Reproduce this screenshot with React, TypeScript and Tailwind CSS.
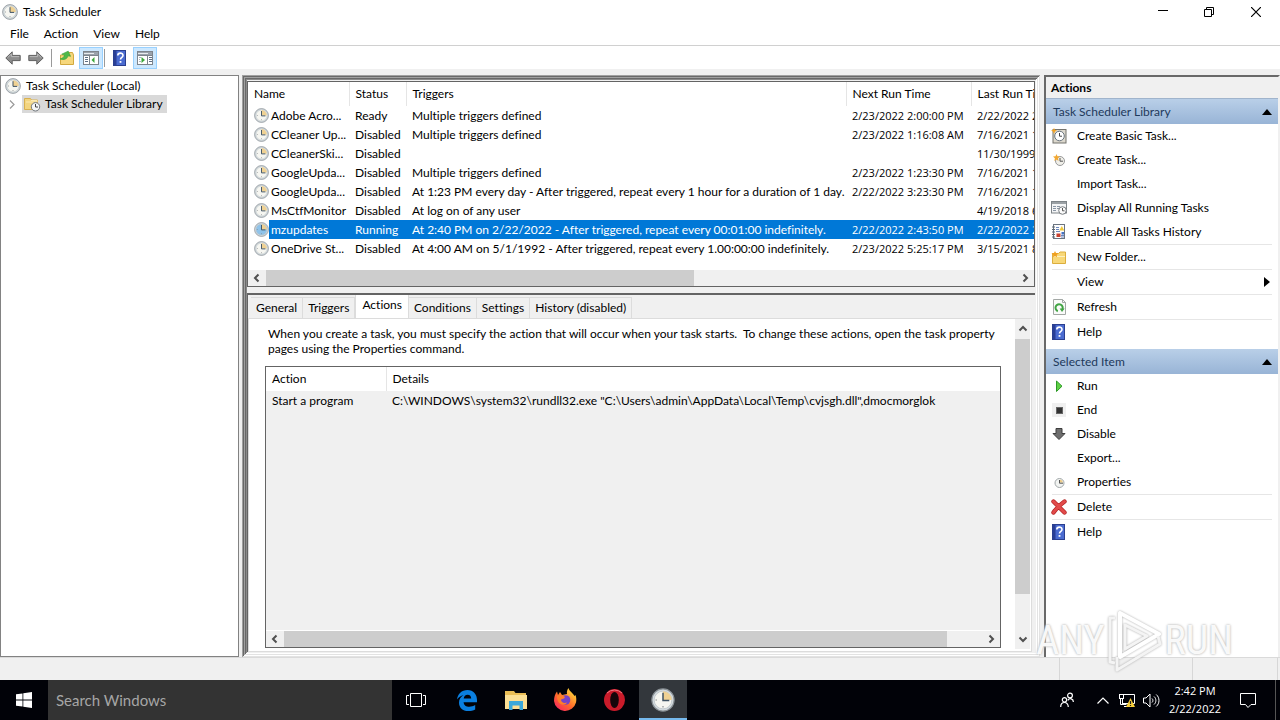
import type { ReactNode } from "react";

type IconProps = { size?: number };

function Clock({ size = 16, tint = "#f6f6f1" }: IconProps & { tint?: string }) {
  return (
    <svg width={size} height={size} viewBox="0 0 16 16" className="shrink-0">
      <circle cx="8" cy="8" r="7.4" fill="#d3dade" stroke="#8b9297" strokeWidth=".8" />
      <circle cx="8" cy="8" r="5.9" fill={tint} stroke="#b9c2c7" strokeWidth=".5" />
      <path d="M8 8V2.2A5.8 5.8 0 0 1 13.8 8z" fill="#efd193" />
      <path d="M8 3.2V8.4H12.2" fill="none" stroke="#3f5263" strokeWidth="1" />
      <path d="M3 8h1M8 12v1" stroke="#8b8f94" strokeWidth=".8" />
    </svg>
  );
}

function Arrow({ flip }: { flip?: boolean }) {
  return (
    <svg width="16" height="16" viewBox="0 0 16 16" className={flip ? "-scale-x-100" : ""}>
      <path d="M.8 8 7.2 1.8V5.4H15.2V10.6H7.2V14.2Z" fill="#8d8d8d" stroke="#5f5f5f" strokeWidth="1" />
      <path d="M2.6 7.6 6.4 4v2.6h7.8" fill="none" stroke="#b9b9b9" strokeWidth="1" />
    </svg>
  );
}

function FolderUp() {
  return (
    <svg width="16" height="16" viewBox="0 0 16 16">
      <path d="M1.5 5H8l1.5-2.5h4l1 2.500v9.500h-13z" fill="#f6d77c" stroke="#d2a93f" />
      <path d="M2 10.500c2.500-1 3.500-3 3.300-5H2.500L8 1l3.500 4.500H9c0 3.500-3 5.500-7 5z" fill="#4fb848" stroke="#36a136" strokeWidth=".6" transform="rotate(14 8 6)" />
    </svg>
  );
}

function PaneIcon({ right }: { right?: boolean }) {
  return (
    <svg width="16" height="14" viewBox="0 0 16 14">
      <rect x=".5" y=".5" width="15" height="13" fill="#fff" stroke="#7d848c" />
      <path d="M1 1h14v3H1z" fill="#9aa2ab" />
      <path d="M1 2.500h10" stroke="#e8ebee" />
      {right ? (
        <g>
          <path d="M10.500 4v9.500M.500 4.500h15" stroke="#7d848c" />
          <path d="M12 6.500h3M12 8.500h3M12 10.500h3" stroke="#5d6f86" />
          <path d="M4.500 6v6L8 9z" fill="#3ca83c" />
          <path d="M2 6.500h2M2 8.500h1M2 10.500h2" stroke="#a9b3bd" />
        </g>
      ) : (
        <g>
          <path d="M6.500 4v9.500M.500 4.500h15" stroke="#7d848c" />
          <path d="M2 6.500h3M2 8.500h3M2 10.500h3" stroke="#5d6f86" />
          <path d="M11.500 6v6L8.500 9z" fill="#3ca83c" />
        </g>
      )}
    </svg>
  );
}

function HelpIcon() {
  return (
    <svg width="16" height="16" viewBox="0 0 16 16" className="shrink-0">
      <rect x="1.500" y=".5" width="12" height="15" fill="#4a6bd0" stroke="#2b3f8f" />
      <path d="M2 1h2.500v14H2z" fill="#2a3f96" />
      <path d="M5.800 5.500C5.800 2.300 11 2.300 11 5.400c0 2-2.500 2-2.500 4.200" fill="none" stroke="#fff" strokeWidth="1.600" />
      <rect x="7.600" y="11" width="1.800" height="1.800" fill="#fff" />
    </svg>
  );
}

function TaskFolder() {
  return (
    <svg width="18" height="16" viewBox="0 0 18 16">
      <path d="M1.500 2.500h6l1 1.500h6v9.500h-13z" fill="#f3d580" stroke="#d8b050" />
      <path d="M3 6h11v-1.500H8" fill="none" stroke="#fbeab5" />
      <circle cx="12.500" cy="10.800" r="4.200" fill="#f5f7f8" stroke="#70767b" />
      <path d="M12.500 8v3h2.500" fill="none" stroke="#444" />
    </svg>
  );
}

function BasicTask() {
  return (
    <svg width="16" height="16" viewBox="0 0 16 16">
      <rect x="2" y="1.500" width="13" height="13.500" fill="#dcd8cd" stroke="#73726d" />
      <circle cx="8.500" cy="8" r="4.800" fill="#fff" stroke="#66717b" />
      <path d="M8.500 5v3.200H11" fill="none" stroke="#444" />
      <path d="M3 0l1 2 2 .5-2 1L3 6 2 3.500 0 2.500 2 2z" fill="#f4a321" />
    </svg>
  );
}

function NewTask() {
  return (
    <svg width="16" height="16" viewBox="0 0 16 16">
      <circle cx="9" cy="9" r="4.500" fill="#f0efe9" stroke="#98999a" />
      <path d="M9 6v3.200h3" fill="none" stroke="#555" />
      <path d="M5.500 2l1 2.200 2.500.3-2 1.800.5 2.700-2-1.400L3.300 9l.6-2.700L2 4.500l2.500-.3z" fill="#f2a832" />
    </svg>
  );
}

function RunningTasks() {
  return (
    <svg width="16" height="16" viewBox="0 0 16 16">
      <rect x=".5" y="1.500" width="15" height="11.500" fill="#f4f5f6" stroke="#7e8488" />
      <path d="M1 3h14" stroke="#9ba1a5" strokeWidth="2" />
      <path d="M2 6.500h3M6 6.500h3M2 8.500h3M6 8.500h2M2 10.500h3" stroke="#8a96a5" />
      <circle cx="11.500" cy="10.500" r="3.800" fill="#fbfbfb" stroke="#777c80" />
      <path d="M11.500 8v2.800h2" fill="none" stroke="#555" />
    </svg>
  );
}

function History() {
  return (
    <svg width="16" height="16" viewBox="0 0 16 16">
      <rect x="2.500" y=".5" width="11" height="14" fill="#fdfdfd" stroke="#6b7480" />
      <path d="M1 3h3M1 5.500h3M1 8h3M1 10.500h3M1 13h3" stroke="#5b6673" />
      <path d="M5 3.500h3M5 5.500h3M5 7.500h4M10 11.500h3M10 13h3" stroke="#6c87bd" />
      <path d="M10.800 2l2.500 4.500h-5z" fill="#f0c83a" />
      <rect x="5.500" y="9.500" width="4" height="3.500" fill="#c9402f" />
      <rect x="10.500" y="8" width="2.500" height="2.500" fill="#4472c4" />
    </svg>
  );
}

function NewFolder() {
  return (
    <svg width="16" height="16" viewBox="0 0 16 16">
      <path d="M1.500 4.500h6l1.500-1.500h5.500v11.500h-13z" fill="#f8d878" stroke="#dcae3d" />
      <path d="M2 7.500h12" stroke="#fdf0bf" />
      <path d="M4 2l1 2 2.500.3-1.800 1.600.4 2.300L4 7 2 8.200l.3-2.300L.5 4.300 3 4z" fill="#f0a020" />
    </svg>
  );
}

function Refresh() {
  return (
    <svg width="16" height="16" viewBox="0 0 16 16">
      <path d="M2.500.5h9l3 3v12h-12z" fill="#fafbfa" stroke="#a3a8a5" />
      <path d="M11.500.5v3h3" fill="none" stroke="#a3a8a5" />
      <path d="M6.800 12.200A3.600 3.600 0 1 1 11.300 10.500" fill="none" stroke="#41a444" strokeWidth="2" />
      <path d="M8.600 9.500h5L11 13z" fill="#41a444" />
    </svg>
  );
}

function Run() {
  return (
    <svg width="16" height="16" viewBox="0 0 16 16">
      <path d="M5.500 3v10.500L11 8.200z" fill="#5fd045" stroke="#2c9a26" />
    </svg>
  );
}

function End() {
  return (
    <svg width="16" height="16" viewBox="0 0 16 16">
      <rect x="1" y="1" width="14" height="14" fill="#f0f0f0" />
      <rect x="5.500" y="5.500" width="6" height="6" fill="#333" stroke="#666" />
    </svg>
  );
}

function Disable() {
  return (
    <svg width="16" height="16" viewBox="0 0 16 16">
      <path d="M5 2.500h6v5h3L8 13.500 2 7.500h3z" fill="#6e6e6e" stroke="#3d3d3d" />
    </svg>
  );
}

function SmallClock() {
  return (
    <svg width="16" height="16" viewBox="0 0 16 16">
      <circle cx="8.500" cy="9" r="4.500" fill="#f2f4f2" stroke="#a2a8aa" />
      <path d="M9 5.500a3.500 3.500 0 0 1 3 3H9z" fill="#edcb85" />
      <path d="M8.500 6v3.200H12" fill="none" stroke="#555" />
    </svg>
  );
}

function Delete() {
  return (
    <svg width="16" height="16" viewBox="0 0 16 16" strokeLinecap="round">
      <path d="M2.500 2.500C6 6 10 10 13.500 13.500M13.500 2.500C10 5 5 10 2.500 13.500" fill="none" stroke="#b32424" strokeWidth="4.400" />
      <path d="M2.500 2.500C6 6 10 10 13.500 13.500M13.500 2.500C10 5 5 10 2.500 13.500" fill="none" stroke="#e24a4a" strokeWidth="3" />
    </svg>
  );
}

function Chevron({ dir }: { dir: "left" | "right" | "up" | "down" }) {
  const paths = {
    left: "M6.500 1.500 3 5l3.500 3.500",
    right: "M3.500 1.500 7 5 3.500 8.500",
    up: "M1.500 6.500 5 3l3.500 3.500",
    down: "M1.500 3.500 5 7l3.500-3.500",
  };
  return (
    <svg width="10" height="10" viewBox="0 0 10 10">
      <path d={paths[dir]} fill="none" stroke="#505050" strokeWidth="2" />
    </svg>
  );
}

function HScroll({ thumb }: { thumb: string }) {
  return (
    <div className="flex h-4 shrink-0 bg-[#f0f0f0]">
      <button aria-label="Scroll left" className="flex w-[18px] items-center justify-center">
        <Chevron dir="left" />
      </button>
      <div className="flex-1">
        <div className={`h-full bg-[#cdcdcd] ${thumb}`} />
      </div>
      <button aria-label="Scroll right" className="flex w-[18px] items-center justify-center">
        <Chevron dir="right" />
      </button>
    </div>
  );
}

const tasks = [
  ["Adobe Acro...", "Ready", "Multiple triggers defined", "2/23/2022 2:00:00 PM", "2/22/2022 2"],
  ["CCleaner Up...", "Disabled", "Multiple triggers defined", "2/23/2022 1:16:08 AM", "7/16/2021 1"],
  ["CCleanerSki...", "Disabled", "", "", "11/30/1999"],
  ["GoogleUpda...", "Disabled", "Multiple triggers defined", "2/23/2022 1:23:30 PM", "7/16/2021 1"],
  ["GoogleUpda...", "Disabled", "At 1:23 PM every day - After triggered, repeat every 1 hour for a duration of 1 day.", "2/22/2022 3:23:30 PM", "7/16/2021 1"],
  ["MsCtfMonitor", "Disabled", "At log on of any user", "", "4/19/2018 6"],
  ["mzupdates", "Running", "At 2:40 PM on 2/22/2022 - After triggered, repeat every 00:01:00 indefinitely.", "2/22/2022 2:43:50 PM", "2/22/2022 2"],
  ["OneDrive St...", "Disabled", "At 4:00 AM on 5/1/1992 - After triggered, repeat every 1.00:00:00 indefinitely.", "2/23/2022 5:25:17 PM", "3/15/2021 8"],
];

function TaskList() {
  return (
    <section className="flex h-[206px] shrink-0 flex-col border border-[#646464] bg-white">
      <div className="flex-1 overflow-hidden">
        <table className="w-full table-fixed whitespace-nowrap text-left">
          <colgroup>
            <col className="w-[101px]" />
            <col className="w-[57px]" />
            <col className="w-[440px]" />
            <col className="w-[125px]" />
            <col />
          </colgroup>
          <thead>
            <tr className="h-6">
              {["Name", "Status", "Triggers", "Next Run Time", "Last Run Ti"].map((h) => (
                <th key={h} className="overflow-hidden border-r border-[#e5e5e5] pl-1.5 font-normal last:border-r-0">{h}</th>
              ))}
            </tr>
          </thead>
          <tbody>
            {tasks.map(([name, ...rest], i) => {
              const selected = name === "mzupdates";
              return (
                <tr key={i} className={selected ? "h-[19px] text-white" : "h-[19px]"}>
                  <td className="p-0">
                    <div className="flex items-center pl-1.5">
                      <Clock size={15} tint={selected ? "#8fc3ea" : "#f6f6f1"} />
                      <span className={`flex-1 pl-0.5 leading-[19px] ${selected ? "bg-[#0078d7]" : ""}`}>{name}</span>
                    </div>
                  </td>
                  {rest.map((text, j) => (
                    <td
                      key={j}
                      className={`overflow-hidden p-0 pl-1.5 leading-[19px] ${selected ? "bg-[#0078d7]" : ""} ${j > 1 ? "font-['Open_Sans'] text-[11px]" : ""}`}
                    >
                      {text}
                    </td>
                  ))}
                </tr>
              );
            })}
          </tbody>
        </table>
      </div>
      <HScroll thumb="w-[57%]" />
    </section>
  );
}

function Details() {
  const tabs = ["General", "Triggers", "Actions", "Conditions", "Settings", "History (disabled)"];
  return (
    <section className="mt-1.5 flex min-h-0 flex-1 flex-col border-t-2 border-l border-[#646464] bg-[#f0f0f0] pr-[3px]">
      <div role="tablist" className="flex h-[23px] shrink-0 items-end pl-[3px]">
        {tabs.map((t) => (
          <button
            key={t}
            role="tab"
            className={
              t === "Actions"
                ? "h-[23px] border-x border-[#dcdcdc] bg-white px-1.5 pb-1"
                : "h-[21px] border-t border-r border-[#dcdcdc] px-[5px]"
            }
          >
            {t}
          </button>
        ))}
      </div>
      <div className="flex min-h-0 flex-1 border border-[#dcdcdc] bg-white">
        <div className="flex min-w-0 flex-1 flex-col pt-[7px] pr-3.5 pb-[3px] pl-4">
          <p className="pl-[3px] leading-[15px]">
            When you create a task, you must specify the action that will occur when your task starts.&nbsp; To change these actions, open the task property pages using the Properties command.
          </p>
          <div className="mt-2.5 flex min-h-0 flex-1 flex-col border border-[#646464] bg-[#f0f0f0]">
            <table className="w-full table-fixed text-left">
              <colgroup>
                <col className="w-[120px]" />
                <col />
              </colgroup>
              <thead className="bg-white">
                <tr className="h-6">
                  <th className="border-r border-[#e5e5e5] pl-1.5 font-normal">Action</th>
                  <th className="pl-1.5 font-normal">Details</th>
                </tr>
              </thead>
              <tbody>
                <tr className="h-[19px]">
                  <td className="pl-1.5">Start a program</td>
                  <td className="pl-1.5">C:\WINDOWS\system32\rundll32.exe "C:\Users\admin\AppData\Local\Temp\cvjsgh.dll",dmocmorglok</td>
                </tr>
              </tbody>
            </table>
            <div className="mt-auto border-t border-white">
              <HScroll thumb="w-[95%]" />
            </div>
          </div>
        </div>
        <div className="mr-px mb-0.5 flex w-[15px] flex-col bg-[#f0f0f0]">
          <button aria-label="Scroll up" className="flex h-5 items-center justify-center">
            <Chevron dir="up" />
          </button>
          <div className="flex-1">
            <div className="h-[88%] bg-[#cdcdcd]" />
          </div>
          <button aria-label="Scroll down" className="flex h-5 items-center justify-center">
            <Chevron dir="down" />
          </button>
        </div>
      </div>
    </section>
  );
}

type Action = { label: string; icon?: ReactNode; sep?: boolean; sub?: boolean };

const libraryActions: Action[] = [
  { label: "Create Basic Task...", icon: <BasicTask /> },
  { label: "Create Task...", icon: <NewTask /> },
  { label: "Import Task..." },
  { label: "Display All Running Tasks", icon: <RunningTasks /> },
  { label: "Enable All Tasks History", icon: <History /> },
  { label: "New Folder...", icon: <NewFolder />, sep: true },
  { label: "View", sep: true, sub: true },
  { label: "Refresh", icon: <Refresh />, sep: true },
  { label: "Help", icon: <HelpIcon />, sep: true },
];

const itemActions: Action[] = [
  { label: "Run", icon: <Run /> },
  { label: "End", icon: <End /> },
  { label: "Disable", icon: <Disable /> },
  { label: "Export..." },
  { label: "Properties", icon: <SmallClock /> },
  { label: "Delete", icon: <Delete />, sep: true },
  { label: "Help", icon: <HelpIcon />, sep: true },
];

function ActionGroup({ title, actions }: { title: string; actions: Action[] }) {
  return (
    <div className="mb-[5px]">
      <button className="flex h-[25px] w-full items-center justify-between bg-linear-to-b from-[#b9cfe8] to-[#98b4d6] pr-1.5 pl-[7px] text-[#1e395b]">
        {title}
        <svg width="10" height="6" viewBox="0 0 10 6">
          <path d="M0 6 5 0l5 6z" fill="#000" />
        </svg>
      </button>
      {actions.map((a) => (
        <div key={a.label}>
          {a.sep && <div className="mx-1.5 h-px bg-[#e6e6e6]" />}
          <button className="flex h-6 w-full items-center gap-2.5 pr-2 pl-[5px] text-left">
            <span className="w-4">{a.icon}</span>
            <span className="flex-1">{a.label}</span>
            {a.sub && (
              <svg width="6" height="10" viewBox="0 0 6 10">
                <path d="M0 0l6 5-6 5z" fill="#000" />
              </svg>
            )}
          </button>
        </div>
      ))}
    </div>
  );
}

function Watermark() {
  return (
    <div className="pointer-events-none absolute right-[47px] bottom-[46px] flex items-center font-['Roboto_Condensed'] text-[40px] leading-none text-white/90 [text-shadow:0_0_2px_#bbb,0_0_3px_#ccc]">
      <span>ANY</span>
      <svg width="60" height="66" viewBox="0 0 60 66" fill="none" className="drop-shadow-[0_0_1px_#aaa]">
        <path d="M15 5v44l39-23z" stroke="#fff" strokeWidth="4" strokeLinejoin="round" />
        <path d="M10 10H5v44l5 1M12 49v13l43-26-2-8M20 17v24l22-13z" stroke="#f4f4f4" strokeWidth="3" strokeLinejoin="round" />
      </svg>
      <span>RUN</span>
    </div>
  );
}

function Taskbar() {
  return (
    <footer className="flex h-10 shrink-0 items-stretch bg-[#010208] text-white">
      <button aria-label="Start" className="flex w-12 items-center justify-center">
        <svg width="16" height="16" viewBox="0 0 16 16" fill="#fff">
          <path d="M0 2.300 6.500 1.400V7.500H0zM7.300 1.300 16 0v7.500H7.300zM0 8.400h6.500v6.200L0 13.700zM7.300 8.400H16V16l-8.700-1.200z" />
        </svg>
      </button>
      <input
        aria-label="Search Windows"
        placeholder="Search Windows"
        className="w-[344px] bg-[#333333] px-2 text-[15px] outline-none placeholder:text-[#a6a6a6]"
      />
      <button aria-label="Task View" className="flex w-[51px] items-center justify-center pr-[3px]">
        <svg width="20" height="14" viewBox="0 0 20 14" fill="none" stroke="#fff">
          <path d="M4.500.5h11v13h-11zM3 2.500H.5v9H3M17 2.500h2.500v9H17" />
        </svg>
      </button>
      <div className="flex gap-px">
        <button aria-label="Edge" className="flex w-12 items-center justify-center">
          <svg width="20" height="21" viewBox="0 0 20 21">
            <path d="M0 9.500C.8 4 4.500 0 10.500 0 16.500 0 20 4.500 20 10v2.200H6.600c.2 3 2.600 4.600 5.600 4.600 2.200 0 4.200-.6 6-1.700v4.300c-2 1.100-4.300 1.600-7 1.600C5.500 21 2 17.500 2 12.700c0-3.200 1.700-6 4.600-7.400C3.800 5.800 1.500 7.300 0 9.500zm6.700-.9h7.500c0-2.400-1.300-3.900-3.600-3.900-2.200 0-3.600 1.600-3.900 3.900z" fill="#0a7fe0" />
          </svg>
        </button>
        <button aria-label="File Explorer" className="flex w-12 items-center justify-center">
          <svg width="22" height="19" viewBox="0 0 22 19">
            <path d="M0 0h9l1.500 2H21v16H0z" fill="#e9bd55" />
            <path d="M0 4h22v14H0z" fill="#fbdf94" />
            <path d="M4 19v-9h14v9h-3.500v-4.500h-7V19z" fill="#3aa8da" />
          </svg>
        </button>
        <button aria-label="Firefox" className="flex w-12 items-center justify-center">
          <svg width="24" height="24" viewBox="0 0 24 24">
            <defs>
              <linearGradient id="fox" x1="0" y1="1" x2=".8" y2="0">
                <stop offset="0" stopColor="#f5156c" />
                <stop offset=".5" stopColor="#ff6a2a" />
                <stop offset="1" stopColor="#ffe23c" />
              </linearGradient>
            </defs>
            <path d="M1 13C1 9 2 6 4 3.500L5 7l2-3 2 3 5-1c-.5-2.500.3-4.500 1.500-6 .5 3 4 4.500 6 8l1-1c1 3 1 5 .5 7.500A11.200 11.200 0 0 1 1 13z" fill="url(#fox)" />
            <circle cx="12.500" cy="12" r="4.800" fill="#7542c8" />
            <path d="M4 8c3-2 6-1 8 1l-1 1.500-3 1c0 3 3 4 6 3-2 4-10 3-10-6.500z" fill="#ff7d2a" />
          </svg>
        </button>
        <button aria-label="Opera" className="flex w-12 items-center justify-center">
          <svg width="21" height="22" viewBox="0 0 21 22">
            <ellipse cx="10.500" cy="11" rx="10.500" ry="11" fill="#c91b2a" />
            <path d="M3 4a11 11 0 0 1 15 0" stroke="#ef7680" fill="none" />
            <ellipse cx="10.500" cy="11" rx="4.300" ry="8" fill="#16060a" />
          </svg>
        </button>
        <button aria-label="Task Scheduler" className="flex w-12 items-center justify-center border-b-2 border-[#76b9ed] bg-[#33373c] pt-0.5">
          <Clock size={24} />
        </button>
      </div>
      <div className="flex-1" />
      <div className="flex items-center">
        <button aria-label="People" className="mr-3 flex w-6 justify-center">
          <svg width="14" height="16" viewBox="0 0 14 16" fill="none" stroke="#fff" strokeWidth="1.200">
            <circle cx="10" cy="3.500" r="2.400" />
            <circle cx="4.500" cy="7.800" r="2.200" />
            <path d="M.7 15c0-6 7.600-6 7.600 0M7.800 8.300c2-3 5.600-1.500 5.600 1.700" />
          </svg>
        </button>
        <button aria-label="Show hidden icons" className="flex w-6 justify-center">
          <svg width="12" height="7" viewBox="0 0 12 7" fill="none" stroke="#fff" strokeWidth="1.200">
            <path d="M.5 6.500 6 1l5.500 5.500" />
          </svg>
        </button>
        <button aria-label="Network" className="flex w-6 justify-center">
          <svg width="17" height="15" viewBox="0 0 17 15">
            <path d="M4.500 1.500h11v9H4M1.500 6v5.500h6M3.500 6v5M5 13.500h4" fill="none" stroke="#fff" />
            <rect x=".5" y="1.500" width="4" height="4" fill="#010208" stroke="#fff" />
            <path d="M11.500 5 16 14H7z" fill="#f8cf3a" />
            <path d="M11.500 8v3M11.500 12v1" stroke="#222" strokeWidth="1.200" />
          </svg>
        </button>
        <button aria-label="Volume" className="flex w-6 justify-center">
          <svg width="17" height="15" viewBox="0 0 17 15" fill="none" stroke="#fff">
            <path d="M.5 5H3l4-4v13l-4-4H.5zM9 5.500c1.200 1 1.200 3 0 4M11 3.500c2.500 2 2.500 6 0 8M13.200 1.500c3.700 3 3.700 9 0 12" />
          </svg>
        </button>
        <button className="ml-1 w-[56px] text-center font-['Open_Sans'] text-[11px] leading-[18px]">
          2:42 PM
          <br />
          2/22/2022
        </button>
        <button aria-label="Notifications" className="mr-[3px] flex w-[49px] justify-center">
          <svg width="16" height="16" viewBox="0 0 16 16" fill="none" stroke="#fff">
            <path d="M.5 1.500h15v11H11L8 15.500 5.500 12.500h-5z" />
          </svg>
        </button>
      </div>
      <button aria-label="Show desktop" className="w-[5px] border-l border-[#555]" />
    </footer>
  );
}

export default function App() {
  return (
    <div className="relative flex h-screen flex-col overflow-hidden bg-[#f0f0f0] font-[Lato,'Open_Sans',sans-serif] text-[12px] text-black [font-variant-ligatures:none]">
      <header className="flex h-6 shrink-0 items-center bg-white pl-0.5">
        <Clock size={16} />
        <h1 className="flex-1 pl-[5px]">Task Scheduler</h1>
        <button aria-label="Minimize" className="flex w-[46px] justify-center">
          <svg width="10" height="10" viewBox="0 0 10 10"><path d="M0 3.500h10" stroke="#000" /></svg>
        </button>
        <button aria-label="Restore" className="flex w-[46px] justify-center">
          <svg width="10" height="10" viewBox="0 0 10 10" fill="none" stroke="#000">
            <path d="M.5 2.500h7v7h-7zM2.500 2.500v-2h7v7h-2" />
          </svg>
        </button>
        <button aria-label="Close" className="flex w-12 justify-center">
          <svg width="10" height="10" viewBox="0 0 10 10"><path d="M0 0l10 10M10 0 0 10" stroke="#000" strokeWidth="1.200" /></svg>
        </button>
      </header>
      <nav className="flex h-[21px] shrink-0 items-center gap-[15px] bg-white pb-px pl-2.5">
        {["File", "Action", "View", "Help"].map((m) => (
          <button key={m}>{m}</button>
        ))}
      </nav>
      <div className="flex h-6 shrink-0 items-center border-t border-[#d0d0d0] bg-white pl-[5px]">
        <button aria-label="Back" className="mr-[7px]"><Arrow /></button>
        <button aria-label="Forward"><Arrow flip /></button>
        <span className="mx-[7px] h-[18px] w-px bg-[#9a9a9a]" />
        <button aria-label="Up one level"><FolderUp /></button>
        <button aria-label="Show console tree" className="ml-1 flex h-[22px] w-6 items-center justify-center border border-[#99d1ff] bg-[#cce8ff]">
          <PaneIcon />
        </button>
        <span className="mr-[7px] ml-px h-[18px] w-px bg-[#9a9a9a]" />
        <button aria-label="Help"><HelpIcon /></button>
        <button aria-label="Show action pane" className="ml-[5px] flex h-[22px] w-6 items-center justify-center border border-[#99d1ff] bg-[#cce8ff]">
          <PaneIcon right />
        </button>
      </div>

      <main className="flex min-h-0 flex-1 pt-1.5">
        <aside className="w-[239px] shrink-0 border border-[#828282] bg-white pt-px">
          <button className="flex h-[18px] items-center gap-[5px] pl-1">
            <Clock size={16} />
            <span>Task Scheduler (Local)</span>
          </button>
          <div className="flex h-[18px] items-center">
            <button aria-label="Expand" className="flex w-[21px] justify-center">
              <svg width="6" height="9" viewBox="0 0 6 9"><path d="M1 .5 5 4.500 1 8.500" fill="none" stroke="#999" strokeWidth="1.200" /></svg>
            </button>
            <button className="flex h-[18px] items-center gap-1 bg-[#d9d9d9] pr-1 pl-px">
              <TaskFolder />
              Task Scheduler Library
            </button>
          </div>
        </aside>

        <div className="ml-[3px] flex min-w-0 flex-1 flex-col p-[5px] pt-1.5 shadow-[inset_1px_1px_#a0a0a0,inset_-1px_-1px_#e3e3e3,inset_2px_2px_#696969,inset_-2px_-2px_#ffffff,inset_3px_3px_#a0a0a0,inset_-3px_-3px_#e3e3e3,inset_4px_4px_#696969,inset_-4px_-4px_#ffffff,inset_5px_5px_#8a8a8a]">
          <TaskList />
          <Details />
        </div>

        <aside className="ml-1 w-[236px] shrink-0 border-t-2 border-r-2 border-l-2 border-t-[#696969] border-r-[#f0f0f0] border-l-[#696969] bg-white">
          <h2 className="flex h-[22px] items-center border-b border-[#a0b4cc] bg-[#f0f0f0] pl-[5px] font-bold">Actions</h2>
          <ActionGroup title="Task Scheduler Library" actions={libraryActions} />
          <ActionGroup title="Selected Item" actions={itemActions} />
        </aside>
      </main>

      <div className="flex h-[23px] shrink-0 justify-end border-t border-[#dadada]">
        <span className="w-[133px] border-l border-[#d7d7d7]" />
        <span className="w-[86px] border-x border-[#d7d7d7]" />
        <span className="w-0.5" />
      </div>
      <Taskbar />
      <Watermark />
    </div>
  );
}
